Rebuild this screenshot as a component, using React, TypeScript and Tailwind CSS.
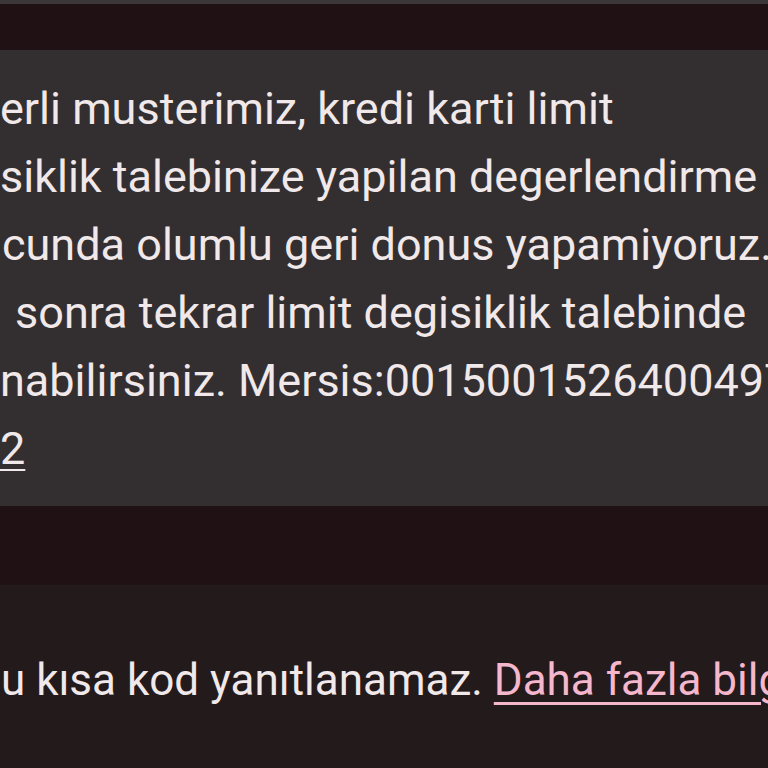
export default function App() {
  const lines = [
    { text: "erli musterimiz, kredi karti limit", pad: "pl-0" },
    { text: "siklik talebinize yapilan degerlendirme", pad: "pl-0" },
    { text: "cunda olumlu geri donus yapamiyoruz.", pad: "pl-[2px]" },
    { text: "sonra tekrar limit degisiklik talebinde", pad: "pl-[15px]" },
    { text: "nabilirsiniz. Mersis:0015001526400497", pad: "pl-0" },
  ];

  return (
    <main
      className="flex h-[768px] w-[768px] flex-col overflow-hidden bg-[#201114]"
      style={{ fontFamily: "Roboto, 'Noto Sans', sans-serif" }}
    >
      <div className="h-[4px] bg-[#3b3638]" />
      <div className="h-[46px]" />

      <section className="h-[456px] overflow-hidden bg-[#332f30] pt-[25px] text-[45px] leading-[68px] text-[#f1e8ea]">
        {lines.map((l) => (
          <p key={l.text} className={`whitespace-nowrap ${l.pad}`}>
            {l.text}
          </p>
        ))}
        <p className="whitespace-nowrap">
          <span className="underline decoration-2 underline-offset-[5px]">2</span>
        </p>
      </section>

      <div className="h-[79px]" />

      <section className="flex-1 bg-[#231a1c] pt-[73px]">
        <p className="whitespace-nowrap pl-[1px] text-[44px] leading-[44px] text-[#f1e8ea]">
          u kısa kod yanıtlanamaz.{" "}
          <span className="text-[#f4b7cb] underline decoration-[3px] underline-offset-[7px]">
            Daha fazla bilgi
          </span>
        </p>
      </section>
    </main>
  );
}
